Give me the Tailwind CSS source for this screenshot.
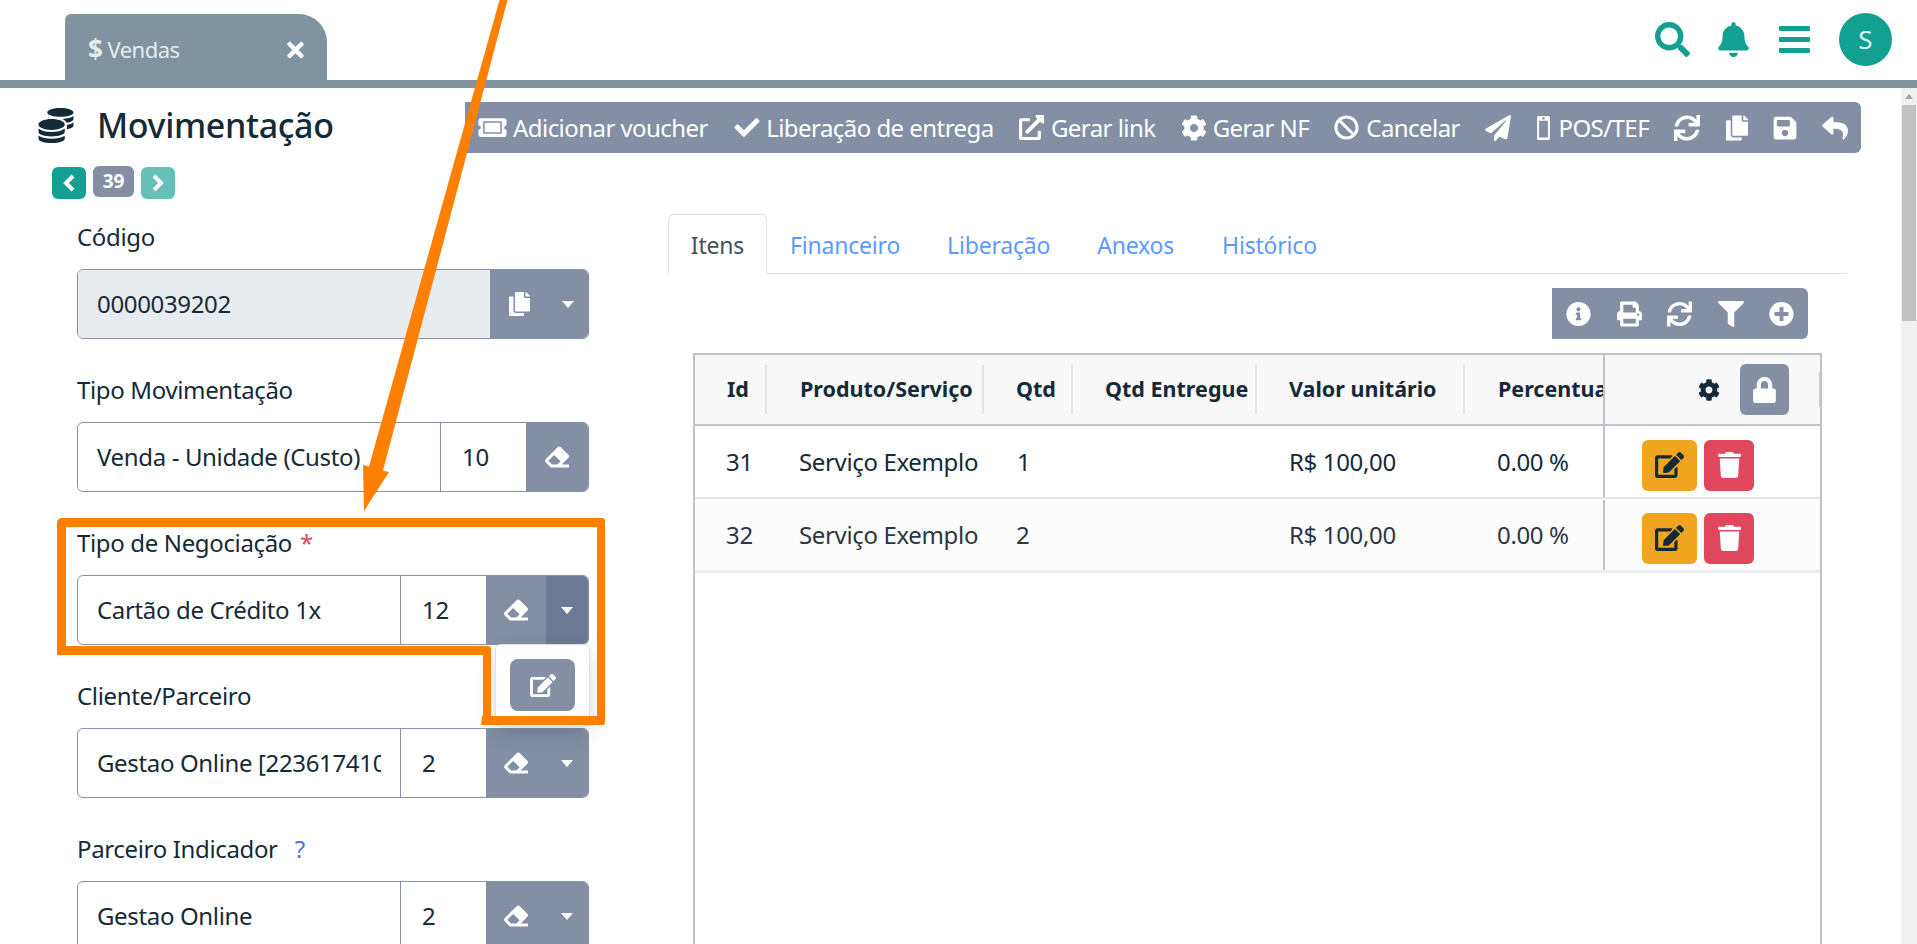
<!DOCTYPE html>
<html lang="pt-BR">
<head>
<meta charset="UTF-8">
<title>Movimentação</title>
<script src="https://cdn.jsdelivr.net/npm/@tailwindcss/browser@4"></script>
</head>
<body class="bg-white">
<svg class="hidden">
  <symbol id="i-search" viewBox="0 0 512 512"><path d="M505 442.7L405.3 343c-4.5-4.5-10.6-7-17-7H372c27.6-35.3 44-79.7 44-128C416 93.1 322.9 0 208 0S0 93.1 0 208s93.1 208 208 208c48.3 0 92.7-16.4 128-44v16.3c0 6.4 2.5 12.5 7 17l99.7 99.7c9.4 9.4 24.6 9.4 33.9 0l28.3-28.3c9.4-9.4 9.4-24.6.1-34zM208 336c-70.7 0-128-57.2-128-128 0-70.7 57.2-128 128-128 70.7 0 128 57.2 128 128 0 70.7-57.2 128-128 128z"/></symbol>
  <symbol id="i-bell" viewBox="0 0 448 512"><path d="M224 512c35.32 0 63.97-28.65 63.97-64H160.03c0 35.35 28.65 64 63.97 64zm215.39-149.71c-19.32-20.76-55.47-51.99-55.47-154.29 0-77.7-54.48-139.9-127.94-155.16V32c0-17.67-14.32-32-31.98-32s-31.98 14.33-31.98 32v20.84C118.56 68.1 64.08 130.3 64.08 208c0 102.3-36.15 133.53-55.47 154.29-6 6.45-8.66 14.16-8.61 21.71.11 16.4 12.98 32 32.1 32h383.8c19.12 0 32-15.6 32.1-32 .05-7.55-2.61-15.27-8.61-21.71z"/></symbol>
  <symbol id="i-times" viewBox="0 0 352 512"><path d="M242.72 256l100.07-100.07c12.28-12.28 12.28-32.19 0-44.48l-22.24-22.24c-12.28-12.28-32.19-12.28-44.48 0L176 189.28 75.93 89.21c-12.28-12.28-32.19-12.28-44.48 0L9.21 111.45c-12.28 12.28-12.28 32.19 0 44.48L109.28 256 9.21 356.07c-12.28 12.28-12.28 32.19 0 44.48l22.24 22.24c12.28 12.28 32.2 12.28 44.48 0L176 322.72l100.07 100.07c12.28 12.28 32.2 12.28 44.48 0l22.24-22.24c12.28-12.28 12.28-32.19 0-44.48L242.72 256z"/></symbol>
  <symbol id="i-coins" viewBox="0 0 512 512"><path d="M0 405.3V448c0 35.3 86 64 192 64s192-28.7 192-64v-42.7C342.7 434.4 267.2 448 192 448S41.3 434.4 0 405.3zM320 128c106 0 192-28.7 192-64S426 0 320 0 128 28.7 128 64s86 64 192 64zM0 300.4V352c0 35.3 86 64 192 64s192-28.7 192-64v-51.6c-41.3 34-116.9 51.6-192 51.6S41.3 334.4 0 300.4zm416 11c57.3-11.1 96-31.7 96-55.4v-42.7c-23.2 16.4-57.3 27.6-96 34.5v63.6zM192 160C86 160 0 195.8 0 240s86 80 192 80 192-35.8 192-80-86-80-192-80zm219.3 56.3c60-10.8 100.7-32 100.7-56.3v-42.7c-35.5 25.1-96.5 38.6-160.7 41.8 29.5 14.3 51.2 33.5 60 57.2z"/></symbol>
  <symbol id="i-ticket" viewBox="0 0 576 512"><path d="M128 160h320v192H128V160zm400 96c0 26.51 21.49 48 48 48v96c0 26.51-21.49 48-48 48H48c-26.51 0-48-21.49-48-48v-96c26.51 0 48-21.49 48-48s-21.49-48-48-48v-96c0-26.51 21.49-48 48-48h480c26.51 0 48 21.49 48 48v96c-26.51 0-48 21.49-48 48zm-48-104c0-13.255-10.745-24-24-24H120c-13.255 0-24 10.745-24 24v208c0 13.255 10.745 24 24 24h336c13.255 0 24-10.745 24-24V152z"/></symbol>
  <symbol id="i-check" viewBox="0 0 512 512"><path d="M173.898 439.404l-166.4-166.4c-9.997-9.997-9.997-26.206 0-36.204l36.203-36.204c9.997-9.998 26.207-9.998 36.204 0L192 312.69 432.095 72.596c9.997-9.997 26.207-9.997 36.204 0l36.203 36.204c9.997 9.997 9.997 26.206 0 36.204l-294.4 294.401c-9.998 9.997-26.207 9.997-36.204-.001z"/></symbol>
  <symbol id="i-ext" viewBox="0 0 512 512"><path d="M432 320h-32a16 16 0 0 0-16 16v112H64V128h144a16 16 0 0 0 16-16V80a16 16 0 0 0-16-16H48a48 48 0 0 0-48 48v352a48 48 0 0 0 48 48h352a48 48 0 0 0 48-48V336a16 16 0 0 0-16-16zM488 0H360c-21.37 0-32.05 25.91-17 41l35.73 35.73L135 320.37a24 24 0 0 0 0 34L157.67 377a24 24 0 0 0 34 0l243.61-243.68L471 169c15 15 41 4.5 41-17V24a24 24 0 0 0-24-24z"/></symbol>
  <symbol id="i-cog" viewBox="0 0 512 512"><path d="M487.4 315.7l-42.6-24.6c4.3-23.2 4.3-47 0-70.2l42.6-24.6c4.9-2.8 7.1-8.6 5.5-14-11.1-35.6-30-67.8-54.7-94.6-3.8-4.1-10-5.1-14.8-2.3L380.8 110c-17.9-15.4-38.5-27.3-60.8-35.1V25.8c0-5.6-3.9-10.5-9.4-11.7-36.7-8.2-74.3-7.8-109.2 0-5.5 1.2-9.4 6.1-9.4 11.7V75c-22.2 7.9-42.8 19.8-60.8 35.1L88.7 85.5c-4.9-2.8-11-1.9-14.8 2.3-24.7 26.7-43.6 58.9-54.7 94.6-1.7 5.4.6 11.2 5.5 14L67.3 221c-4.3 23.2-4.3 47 0 70.2l-42.6 24.6c-4.9 2.8-7.1 8.6-5.5 14 11.1 35.6 30 67.8 54.7 94.6 3.8 4.1 10 5.1 14.8 2.3l42.6-24.6c17.9 15.4 38.5 27.3 60.8 35.1v49.2c0 5.6 3.9 10.5 9.4 11.7 36.7 8.2 74.3 7.8 109.2 0 5.5-1.2 9.4-6.1 9.4-11.7v-49.2c22.2-7.9 42.8-19.8 60.8-35.1l42.6 24.6c4.9 2.8 11 1.9 14.8-2.3 24.7-26.7 43.6-58.9 54.7-94.6 1.5-5.5-.7-11.3-5.6-14.1zM256 336c-44.1 0-80-35.9-80-80s35.9-80 80-80 80 35.9 80 80-35.9 80-80 80z"/></symbol>
  <symbol id="i-ban" viewBox="0 0 512 512"><path d="M256 8C119.034 8 8 119.033 8 256s111.034 248 248 248 248-111.034 248-248S392.967 8 256 8zm130.108 117.892c65.448 65.448 70 165.481 20.677 235.637L150.47 105.216c70.204-49.356 170.226-44.735 235.638 20.676zM125.892 386.108c-65.448-65.448-70-165.481-20.677-235.637L361.53 406.784c-70.203 49.356-170.226 44.736-235.638-20.676z"/></symbol>
  <symbol id="i-plane" viewBox="0 0 512 512"><path d="M476 3.2L12.5 270.6c-18.1 10.4-15.8 35.6 2.2 43.2L121 358.4l287.3-253.2c5.5-4.9 13.3 2.6 8.6 8.3L176 407v80.5c0 23.6 28.5 32.9 42.5 15.8L282 426l124.6 52.2c14.2 6 30.4-2.9 33-18.2l72-432C515 7.8 493.3-6.8 476 3.2z"/></symbol>
  <symbol id="i-sync" viewBox="0 0 512 512"><path d="M440.65 12.57l4 82.77A247.16 247.16 0 0 0 255.83 8C134.73 8 33.91 94.92 12.29 209.82A12 12 0 0 0 24.09 224h49.05a12 12 0 0 0 11.67-9.26 175.91 175.91 0 0 1 317-56.94l-101.46-4.86a12 12 0 0 0-12.57 12v47.41a12 12 0 0 0 12 12H500a12 12 0 0 0 12-12V12a12 12 0 0 0-12-12h-47.37a12 12 0 0 0-11.98 12.57zM255.83 432a175.61 175.61 0 0 1-146-77.8l101.8 4.87a12 12 0 0 0 12.57-12v-47.4a12 12 0 0 0-12-12H12a12 12 0 0 0-12 12V500a12 12 0 0 0 12 12h47.35a12 12 0 0 0 12-12.6l-4.15-82.57A247.17 247.17 0 0 0 255.83 504c121.11 0 221.93-86.92 243.55-201.82a12 12 0 0 0-11.8-14.18h-49.05a12 12 0 0 0-11.67 9.26A175.86 175.86 0 0 1 255.83 432z"/></symbol>
  <symbol id="i-copy" viewBox="0 0 448 512"><path d="M320 448v40c0 13.255-10.745 24-24 24H24c-13.255 0-24-10.745-24-24V120c0-13.255 10.745-24 24-24h72v296c0 30.879 25.121 56 56 56h168zm0-344V0H152c-13.255 0-24 10.745-24 24v368c0 13.255 10.745 24 24 24h272c13.255 0 24-10.745 24-24V128H344c-13.2 0-24-10.8-24-24zm120.971-31.029L375.029 7.029A24 24 0 0 0 358.059 0H352v96h96v-6.059a24 24 0 0 0-7.029-16.97z"/></symbol>
  <symbol id="i-save" viewBox="0 0 448 512"><path d="M433.941 129.941l-83.882-83.882A48 48 0 0 0 316.118 32H48C21.49 32 0 53.49 0 80v352c0 26.51 21.49 48 48 48h352c26.51 0 48-21.49 48-48V163.882a48 48 0 0 0-14.059-33.941zM224 416c-35.346 0-64-28.654-64-64 0-35.346 28.654-64 64-64s64 28.654 64 64c0 35.346-28.654 64-64 64zm96-304.52V212c0 6.627-5.373 12-12 12H76c-6.627 0-12-5.373-12-12V108c0-6.627 5.373-12 12-12h228.52c3.183 0 6.235 1.264 8.485 3.515l3.48 3.48A11.996 11.996 0 0 1 320 111.48z"/></symbol>
  <symbol id="i-reply" viewBox="0 0 512 512"><path d="M8.309 189.836L184.313 37.851C199.719 24.546 224 35.347 224 56.015v80.053c160.629 1.839 288 34.032 288 186.258 0 61.441-39.581 122.309-83.333 154.132-13.653 9.931-33.111-2.533-28.077-18.631 45.344-145.012-21.507-183.51-176.59-185.742V360c0 20.7-24.3 31.453-39.687 18.164l-176.004-152c-11.071-9.562-11.086-26.753 0-36.328z"/></symbol>
  <symbol id="i-eraser" viewBox="0 0 512 512"><path d="M497.941 273.941c18.745-18.745 18.745-49.137 0-67.882l-160-160c-18.745-18.745-49.136-18.746-67.883 0l-256 256c-18.745 18.745-18.745 49.137 0 67.882l96 96A48.004 48.004 0 0 0 144 480h356c6.627 0 12-5.373 12-12v-40c0-6.627-5.373-12-12-12H355.883l142.058-142.059zm-302.627-62.627l137.373 137.373L265.373 416H150.628l-80-80 124.686-124.686z"/></symbol>
  <symbol id="i-edit" viewBox="0 0 576 512"><path d="M402.6 83.2l90.2 90.2c3.8 3.8 3.8 10 0 13.8L274.4 405.6l-92.8 10.3c-12.4 1.4-22.9-9.1-21.5-21.5l10.3-92.8L388.8 83.2c3.8-3.8 10-3.8 13.8 0zm162-22.9l-48.8-48.8c-15.2-15.2-39.9-15.2-55.2 0l-35.4 35.4c-3.8 3.8-3.8 10 0 13.8l90.2 90.2c3.8 3.8 10 3.8 13.8 0l35.4-35.4c15.2-15.3 15.2-40 0-55.2zM384 346.2V448H64V128h229.8c3.2 0 6.2-1.3 8.5-3.5l40-40c7.6-7.6 2.2-20.5-8.5-20.5H48C21.5 64 0 85.5 0 112v352c0 26.5 21.5 48 48 48h352c26.5 0 48-21.5 48-48V306.2c0-10.7-12.9-16-20.5-8.5l-40 40c-2.2 2.3-3.5 5.3-3.5 8.5z"/></symbol>
  <symbol id="i-trash" viewBox="0 0 448 512"><path d="M432 32H312l-9.4-18.7A24 24 0 0 0 281.1 0H166.8a23.72 23.72 0 0 0-21.4 13.3L136 32H16A16 16 0 0 0 0 48v32a16 16 0 0 0 16 16h416a16 16 0 0 0 16-16V48a16 16 0 0 0-16-16zM53.2 467a48 48 0 0 0 47.9 45h245.8a48 48 0 0 0 47.9-45L416 128H32z"/></symbol>
  <symbol id="i-lock" viewBox="0 0 448 512"><path d="M400 224h-24v-72C376 68.2 307.8 0 224 0S72 68.2 72 152v72H48c-26.5 0-48 21.5-48 48v192c0 26.5 21.5 48 48 48h352c26.5 0 48-21.5 48-48V272c0-26.5-21.5-48-48-48zm-104 0H152v-72c0-39.7 32.3-72 72-72s72 32.3 72 72v72z"/></symbol>
  <symbol id="i-info" viewBox="0 0 512 512"><path d="M256 8C119.043 8 8 119.083 8 256c0 136.997 111.043 248 248 248s248-111.003 248-248C504 119.083 392.957 8 256 8zm0 110c23.196 0 42 18.804 42 42s-18.804 42-42 42-42-18.804-42-42 18.804-42 42-42zm56 254c0 6.627-5.373 12-12 12h-88c-6.627 0-12-5.373-12-12v-24c0-6.627 5.373-12 12-12h12v-64h-12c-6.627 0-12-5.373-12-12v-24c0-6.627 5.373-12 12-12h64c6.627 0 12 5.373 12 12v100h12c6.627 0 12 5.373 12 12v24z"/></symbol>
  <symbol id="i-print" viewBox="0 0 512 512"><path d="M448 192V77.25c0-8.49-3.37-16.62-9.37-22.63L393.37 9.37c-6-6-14.14-9.37-22.63-9.37H96C78.33 0 64 14.33 64 32v160c-35.35 0-64 28.65-64 64v112c0 8.84 7.16 16 16 16h48v96c0 17.67 14.33 32 32 32h320c17.67 0 32-14.33 32-32v-96h48c8.84 0 16-7.16 16-16V256c0-35.35-28.65-64-64-64zm-64 256H128v-96h256v96zm0-224H128V64h192v48c0 8.84 7.16 16 16 16h48v96zm48 72c-13.25 0-24-10.75-24-24 0-13.26 10.75-24 24-24s24 10.74 24 24c0 13.25-10.75 24-24 24z"/></symbol>
  <symbol id="i-filter" viewBox="0 0 512 512"><path d="M487.976 0H24.028C2.71 0-8.047 25.866 7.058 40.971L192 225.941V432c0 7.831 3.821 15.17 10.237 19.662l80 55.98C298.02 518.69 320 507.493 320 487.98V225.941l184.947-184.97C520.021 25.896 509.338 0 487.976 0z"/></symbol>
  <symbol id="i-plus" viewBox="0 0 512 512"><path d="M256 8C119 8 8 119 8 256s111 248 248 248 248-111 248-248S393 8 256 8zm144 276c0 6.6-5.4 12-12 12h-92v92c0 6.6-5.4 12-12 12h-56c-6.6 0-12-5.4-12-12v-92h-92c-6.6 0-12-5.4-12-12v-56c0-6.6 5.4-12 12-12h92v-92c0-6.6 5.4-12 12-12h56c6.6 0 12 5.4 12 12v92h92c6.6 0 12 5.4 12 12v56z"/></symbol>
  <symbol id="i-mobile" viewBox="0 0 16 30"><path fill-rule="evenodd" d="M2 0h12a2 2 0 0 1 2 2v26a2 2 0 0 1-2 2H2a2 2 0 0 1-2-2V2a2 2 0 0 1 2-2zm.5 6v21h11V6zM6.500 1.500v3h3v-3z"/></symbol>
  <symbol id="i-caret" viewBox="0 0 14 8"><path d="M0 0h14L7 8z"/></symbol>
</svg>

<div class="relative w-[1917px] h-[944px] overflow-hidden font-['Noto_Sans',sans-serif] text-[#152a38]">

  <header class="flex h-20 items-start">
    <div class="flex items-center w-[262px] h-[66px] mt-[14px] ml-[65px] pl-[23px] pr-[23px] pt-[4px] bg-[#7f949e] rounded-tl-md rounded-tr-[28px] text-[#e6ecee] text-[22px] tracking-[-0.5px]">
      <span class="font-bold text-[26px] mr-[5px]">$</span>
      <span>Vendas</span>
      <svg class="w-[17px] h-[24px] ml-auto mt-[1px] fill-white"><use href="#i-times"/></svg>
    </div>
    <div class="ml-auto flex items-center h-20 pb-[1px] fill-[#12a093]">
      <svg class="w-[35px] h-[35px]"><use href="#i-search"/></svg>
      <svg class="w-[31px] h-[35px] ml-[28px]"><use href="#i-bell"/></svg>
      <div class="flex flex-col gap-[6px] w-[31px] ml-[30px]">
        <div class="h-[5px] bg-[#12a093] rounded-[1px]"></div>
        <div class="h-[5px] bg-[#12a093] rounded-[1px]"></div>
        <div class="h-[5px] bg-[#12a093] rounded-[1px]"></div>
      </div>
      <div class="flex items-center justify-center w-[53px] h-[53px] ml-[29px] mr-[25px] rounded-full bg-[#12a093] text-[#dff3f1] text-[26px]">S</div>
    </div>
  </header>
  <div class="h-2 bg-[#7f949e]"></div>

  <div class="flex">
    <main class="w-[1901px] h-[856px]">
      <div class="flex h-[78px] pt-[14px]">
        <div class="flex items-center h-[46px] ml-[38px]">
          <svg class="w-[36px] h-[35px] fill-[#152a38]"><use href="#i-coins"/></svg>
          <h1 class="ml-[23px] text-[34px] font-medium tracking-[-0.35px]">Movimentação</h1>
        </div>
        <div class="ml-auto mr-[40px] flex items-center justify-between w-[1396px] h-[51px] pl-[13px] pr-[13px] bg-[#848fa6] rounded-r-md text-white text-[24px] tracking-[-0.55px] fill-white whitespace-nowrap">
          <div class="flex items-center gap-[6px]"><svg class="w-[29px] h-[25px]"><use href="#i-ticket"/></svg>Adicionar voucher</div>
          <div class="flex items-center gap-[5px]"><svg class="w-[28px] h-[25px]"><use href="#i-check"/></svg>Liberação de entrega</div>
          <div class="flex items-center gap-[7px]"><svg class="w-[25px] h-[25px]"><use href="#i-ext"/></svg>Gerar link</div>
          <div class="flex items-center gap-[6px]"><svg class="w-[26px] h-[26px]"><use href="#i-cog"/></svg>Gerar NF</div>
          <div class="flex items-center gap-[7px]"><svg class="w-[25px] h-[25px]"><use href="#i-ban"/></svg>Cancelar</div>
          <svg class="w-[26px] h-[26px]"><use href="#i-plane"/></svg>
          <div class="flex items-center gap-[7px]"><svg class="w-[15px] h-[24px]"><use href="#i-mobile"/></svg>POS/TEF</div>
          <svg class="w-[26px] h-[26px]"><use href="#i-sync"/></svg>
          <svg class="w-[22px] h-[26px]"><use href="#i-copy"/></svg>
          <svg class="w-[24px] h-[26px]"><use href="#i-save"/></svg>
          <svg class="w-[26px] h-[26px]"><use href="#i-reply"/></svg>
        </div>
      </div>

      <div class="flex">
        <!-- form column -->
        <section class="w-[668px] shrink-0 text-[24px] tracking-[-0.35px]">
          <div class="flex items-start gap-[7px] ml-[52px] h-[55px] text-white">
            <button class="flex items-center justify-center w-[34px] h-[32px] mt-[1px] rounded-md bg-[#12a093]"><svg class="w-[12px] h-[18px] fill-none stroke-white stroke-[4]" viewBox="0 0 12 18"><path d="M10 2L3 9l7 7"/></svg></button>
            <div class="flex items-center justify-center w-[41px] h-[31px] rounded-md bg-[#848fa6] text-[19px] font-bold tracking-normal">39</div>
            <button class="flex items-center justify-center w-[34px] h-[32px] mt-[1px] rounded-md bg-[#66c0b7]"><svg class="w-[12px] h-[18px] fill-none stroke-white stroke-[4]" viewBox="0 0 12 18"><path d="M2 2l7 7-7 7"/></svg></button>
          </div>

          <div class="ml-[77px] w-[512px]">
            <label class="flex items-center h-[32px] mb-[16px]">Código</label>
            <div class="flex h-[70px] mb-[35px] border border-[#8792a8] rounded-md overflow-hidden">
              <div class="flex items-center flex-1 pl-[19px] bg-[#e9ecef]">0000039202</div>
              <div class="flex items-center w-[98px] bg-[#848fa6] fill-white">
                <svg class="w-[21px] h-[24px] ml-[19px]"><use href="#i-copy"/></svg>
                <svg class="w-[12px] h-[7px] ml-[32px]"><use href="#i-caret"/></svg>
              </div>
            </div>

            <label class="flex items-center h-[32px] mb-[16px]">Tipo Movimentação</label>
            <div class="flex h-[70px] mb-[35px] border border-[#8792a8] rounded-md overflow-hidden">
              <div class="flex items-center w-[363px] pl-[19px] border-r border-[#8792a8] whitespace-nowrap">Venda - Unidade (Custo)</div>
              <div class="flex items-center flex-1 pl-[21px]">10</div>
              <div class="flex items-center justify-center w-[62px] bg-[#848fa6] fill-white"><svg class="w-[24px] h-[24px]"><use href="#i-eraser"/></svg></div>
            </div>

            <label class="flex items-center h-[32px] mb-[16px]">Tipo de Negociação<span class="ml-[8px] text-[#e2485f]">*</span></label>
            <div class="flex h-[70px] mb-[35px] border border-[#8792a8] rounded-md overflow-hidden">
              <div class="flex items-center w-[323px] pl-[19px] border-r border-[#8792a8] whitespace-nowrap">Cartão de Crédito 1x</div>
              <div class="flex items-center flex-1 pl-[21px]">12</div>
              <div class="flex items-center justify-center w-[60px] bg-[#848fa6] fill-white"><svg class="w-[24px] h-[24px]"><use href="#i-eraser"/></svg></div>
              <div class="flex items-center justify-center w-[42px] bg-[#6b7a94] fill-white"><svg class="w-[12px] h-[7px]"><use href="#i-caret"/></svg></div>
            </div>

            <label class="flex items-center h-[32px] mb-[16px]">Cliente/Parceiro</label>
            <div class="flex h-[70px] mb-[35px] border border-[#8792a8] rounded-md overflow-hidden">
              <div class="flex items-center w-[323px] pl-[19px] pr-[19px] border-r border-[#8792a8] whitespace-nowrap"><span class="block overflow-hidden">Gestao Online [22361741000199]</span></div>
              <div class="flex items-center flex-1 pl-[21px]">2</div>
              <div class="flex items-center justify-center w-[60px] bg-[#848fa6] fill-white"><svg class="w-[24px] h-[24px]"><use href="#i-eraser"/></svg></div>
              <div class="flex items-center justify-center w-[42px] bg-[#848fa6] fill-white"><svg class="w-[12px] h-[7px]"><use href="#i-caret"/></svg></div>
            </div>

            <label class="flex items-center h-[32px] mb-[16px]">Parceiro Indicador<span class="ml-[17px] text-[#4a78d8]">?</span></label>
            <div class="flex h-[70px] border border-[#8792a8] rounded-md overflow-hidden">
              <div class="flex items-center w-[323px] pl-[19px] border-r border-[#8792a8] whitespace-nowrap">Gestao Online</div>
              <div class="flex items-center flex-1 pl-[21px]">2</div>
              <div class="flex items-center justify-center w-[60px] bg-[#848fa6] fill-white"><svg class="w-[24px] h-[24px]"><use href="#i-eraser"/></svg></div>
              <div class="flex items-center justify-center w-[42px] bg-[#848fa6] fill-white"><svg class="w-[12px] h-[7px]"><use href="#i-caret"/></svg></div>
            </div>
          </div>
        </section>

        <!-- items column -->
        <section class="w-[1179px] mt-[48px]">
          <nav class="flex h-[60px] border-b border-[#dee2e6] text-[23px] tracking-[-0.2px] text-[#5b9bff]">
            <a class="flex items-center justify-center w-[99px] h-[60px] pt-[3px] border border-[#dee2e6] border-b-white rounded-t-md bg-white text-[#495057]">Itens</a>
            <a class="flex items-center pt-[3px] ml-[23px]">Financeiro</a>
            <a class="flex items-center pt-[3px] ml-[47px]">Liberação</a>
            <a class="flex items-center pt-[3px] ml-[47px]">Anexos</a>
            <a class="flex items-center pt-[3px] ml-[48px]">Histórico</a>
          </nav>

          <div class="flex items-center justify-between w-[256px] h-[51px] mt-[14px] ml-[884px] pl-[14px] pr-[14px] bg-[#848fa6] rounded-r-md fill-white">
            <svg class="w-[25px] h-[26px]"><use href="#i-info"/></svg>
            <svg class="w-[25px] h-[26px]"><use href="#i-print"/></svg>
            <svg class="w-[25px] h-[26px]"><use href="#i-sync"/></svg>
            <svg class="w-[26px] h-[26px]"><use href="#i-filter"/></svg>
            <svg class="w-[25px] h-[26px]"><use href="#i-plus"/></svg>
          </div>

          <div class="w-[1129px] h-[591px] mt-[14px] ml-[25px] border-x-2 border-t-2 border-[#bfc1cb] text-[24px] tracking-[-0.35px]">
            <div class="grid grid-cols-[72px_217px_89px_184px_208px_138px_1fr] h-[71px] bg-[#f8f8f8] border-b-2 border-[#bfc1cb] font-bold text-[21.5px] tracking-normal items-center whitespace-nowrap">
              <div class="flex items-center h-[49px] pl-[32px] border-r-2 border-[#e3e3e3]">Id</div>
              <div class="flex items-center h-[49px] pl-[33px] border-r-2 border-[#e3e3e3]">Produto/Serviço</div>
              <div class="flex items-center h-[49px] pl-[32px] border-r-2 border-[#e3e3e3]">Qtd</div>
              <div class="flex items-center h-[49px] pl-[32px] border-r-2 border-[#e3e3e3] overflow-hidden">Qtd Entregue</div>
              <div class="flex items-center h-[49px] pl-[32px] border-r-2 border-[#e3e3e3]">Valor unitário</div>
              <div class="flex items-center h-[49px] pl-[33px] overflow-hidden">Percentual</div>
              <div class="flex items-center self-stretch border-l-2 border-[#bfc1cb]">
                <svg class="w-[22px] h-[22px] ml-[93px] fill-[#152a38]"><use href="#i-cog"/></svg>
                <div class="flex items-center justify-center w-[49px] h-[51px] ml-[20px] rounded-md bg-[#848fa6] fill-white"><svg class="w-[23px] h-[26px]"><use href="#i-lock"/></svg></div>
                <div class="w-[2px] h-[35px] ml-[30px] bg-[#c9cbd3]"></div>
              </div>
            </div>

            <div class="grid grid-cols-[72px_217px_89px_184px_208px_138px_1fr] h-[73px] border-b-2 border-[#e3e6ea] items-center whitespace-nowrap">
              <div class="pl-[31px]">31</div>
              <div class="pl-[32px] overflow-hidden">Serviço Exemplo - Teste</div>
              <div class="pl-[33px]">1</div>
              <div></div>
              <div class="pl-[32px]">R$ 100,00</div>
              <div class="pl-[32px]">0.00 %</div>
              <div class="flex items-center gap-[7px] self-stretch pl-[37px] pt-[7px] border-l-2 border-[#bfc1cb]">
                <button class="flex items-center justify-center w-[55px] h-[51px] rounded-md bg-[#f0a521] fill-[#152a38]"><svg class="w-[29px] h-[26px]"><use href="#i-edit"/></svg></button>
                <button class="flex items-center justify-center w-[50px] h-[51px] rounded-md bg-[#e0475d] fill-white"><svg class="w-[23px] h-[26px]"><use href="#i-trash"/></svg></button>
              </div>
            </div>

            <div class="grid grid-cols-[72px_217px_89px_184px_208px_138px_1fr] h-[74px] pt-[1px] bg-[#fcfcfc] border-b-[3px] border-[#ebeff3] items-center whitespace-nowrap text-[#2b3640]">
              <div class="pl-[31px]">32</div>
              <div class="pl-[32px] overflow-hidden">Serviço Exemplo - Teste</div>
              <div class="pl-[32px]">2</div>
              <div></div>
              <div class="pl-[32px]">R$ 100,00</div>
              <div class="pl-[32px]">0.00 %</div>
              <div class="flex items-center gap-[7px] self-stretch pl-[37px] pt-[6px] border-l-2 border-[#bfc1cb]">
                <button class="flex items-center justify-center w-[55px] h-[51px] rounded-md bg-[#f0a521] fill-[#152a38]"><svg class="w-[29px] h-[26px]"><use href="#i-edit"/></svg></button>
                <button class="flex items-center justify-center w-[50px] h-[51px] rounded-md bg-[#e0475d] fill-white"><svg class="w-[23px] h-[26px]"><use href="#i-trash"/></svg></button>
              </div>
            </div>
          </div>
        </section>
      </div>
    </main>

    <div class="relative w-4 h-[856px] bg-[#f1f1f1]">
      <svg class="absolute left-[4px] top-[6px] w-[8px] h-[5px] fill-[#a3a3a3]" viewBox="0 0 8 5"><path d="M4 0l4 5H0z"/></svg>
      <div class="absolute left-[1px] top-[17px] w-[14px] h-[216px] bg-[#c1c1c1]"></div>
    </div>
  </div>

  <!-- dropdown opened from the Tipo de Negociacao caret -->
  <div class="absolute left-[495px] top-[644px] flex items-start justify-center w-[95px] h-[83px] pt-[14px] bg-white border border-[#dcdfe4] rounded-md shadow-[0_8px_20px_rgba(0,0,0,0.15)]">
    <button class="flex items-center justify-center w-[65px] h-[52px] rounded-lg bg-[#848fa6] fill-white"><svg class="w-[26px] h-[23px]"><use href="#i-edit"/></svg></button>
  </div>

  <!-- orange annotation drawn over the screenshot -->
  <svg class="absolute left-0 top-0 w-[1917px] h-[944px] pointer-events-none fill-[#ff8000]" viewBox="0 0 1917 944">
    <path fill-rule="evenodd" d="M62 518H602a3 3 0 0 1 3 3V722a3 3 0 0 1-3 3H481L482 716H483V655H57V523a5 5 0 0 1 5-5zM66 527V646H488a3 3 0 0 1 3 3V716H597V527z"/>
    <path d="M499.500 0h8L383 470.500 389 472 364 511l-1-46 6 1.500z"/>
  </svg>
</div>
</body>
</html>
